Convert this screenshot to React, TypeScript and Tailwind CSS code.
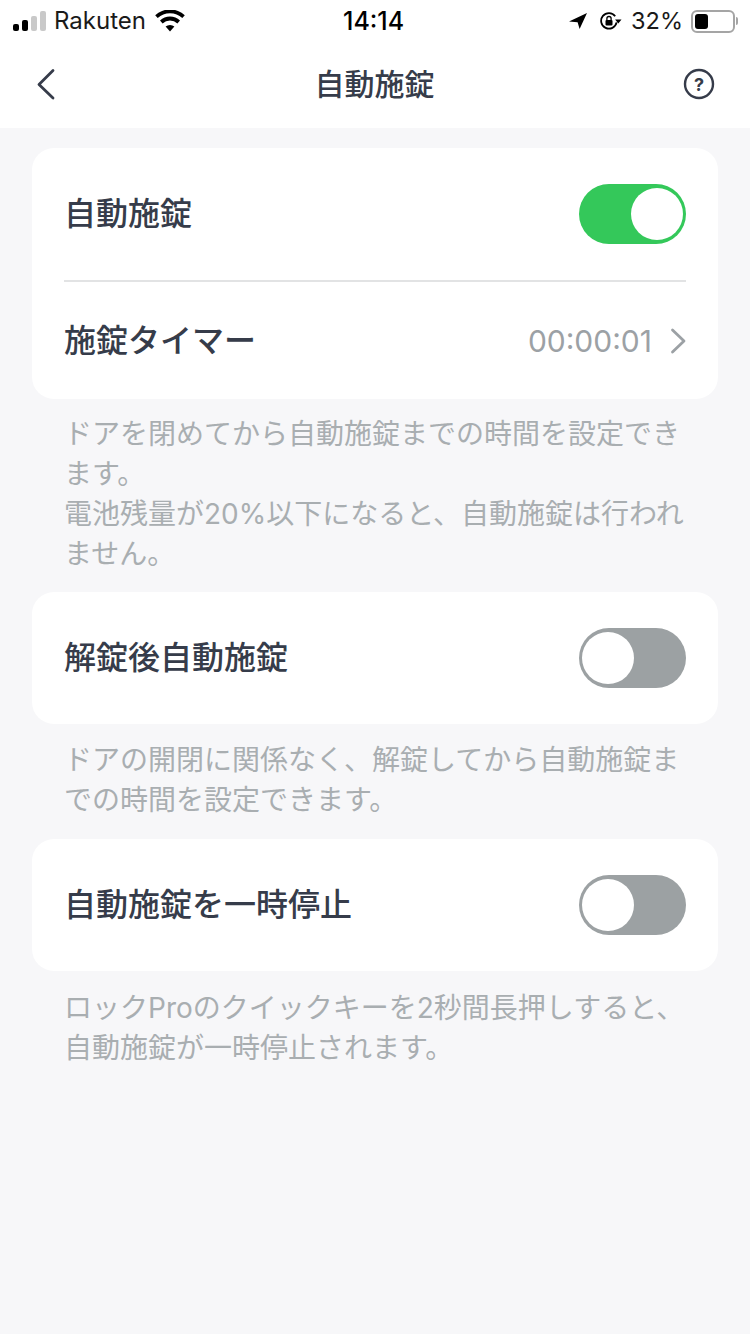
const FONT = "font-['Inter','Noto_Sans_CJK_JP',sans-serif]";

function Toggle({ on }: { on: boolean }) {
  return (
    <div
      className={`w-[107px] h-[60px] rounded-full py-[4px] flex ${on ? 'bg-[#34c85a] justify-end pr-[3px]' : 'bg-[#9ca1a3] justify-start pl-[3px]'}`}
    >
      <div className="w-[52px] h-[52px] rounded-full bg-white" />
    </div>
  );
}

function StatusBar() {
  return (
    <div className="h-[40px] relative flex items-center justify-between pl-[13px] pr-[12px] pt-[2px] text-[24px] text-[#1a1a1a]">
      <div className="flex items-center">
        <svg width="33" height="20" viewBox="0 0 33 20">
          <rect x="0" y="13" width="6" height="7" rx="2" fill="#000" />
          <rect x="9" y="9" width="6" height="11" rx="2" fill="#000" />
          <rect x="18" y="5" width="6" height="15" rx="2" fill="#c9c9c9" />
          <rect x="27" y="0" width="6" height="20" rx="2" fill="#c9c9c9" />
        </svg>
        <span className="ml-[8px] leading-none">Rakuten</span>
        <svg className="ml-[9px]" width="30" height="22" viewBox="0 0 30 22">
          <path d="M15 21.5 10.6 16.6a6.5 6.5 0 0 1 8.8 0Z" fill="#000" />
          <path d="M7.6 13.4 5 10.5a14.5 14.5 0 0 1 20 0l-2.6 2.9a10.7 10.7 0 0 0-14.8 0Z" fill="#000" />
          <path d="M2.7 8 .2 5.2a21.8 21.8 0 0 1 29.6 0L27.3 8a18 18 0 0 0-24.6 0Z" fill="#000" />
        </svg>
      </div>
      <span className="absolute left-[343px] top-[8px] text-[25px] leading-[26px] font-medium text-black">14:14</span>
      <div className="flex items-center">
        <svg width="18" height="16" viewBox="0 0 18 16">
          <path d="M18 0 10.6 16 8.6 9.2 0 8.6Z" fill="#000" />
        </svg>
        <svg className="ml-[13px]" width="22" height="18" viewBox="0 0 22 18">
          <path d="M16.6 10.4A7.8 7.8 0 1 1 15.2 4.2" fill="none" stroke="#000" strokeWidth="1.8" />
          <path d="M21.5 7.4h-6.4l3.2 4Z" fill="#000" />
          <rect x="5.5" y="8" width="7" height="5.4" rx="1" fill="#000" />
          <path d="M6.9 8V6.6a2.1 2.1 0 0 1 4.2 0V8" fill="none" stroke="#000" strokeWidth="1.3" />
        </svg>
        <span className="ml-[9px] text-[23.5px] leading-none">32%</span>
        <div className="ml-[8px] w-[44px] h-[23px] rounded-[6px] border-2 border-[#a5a5a5] p-[2px]">
          <div className="w-[13px] h-full rounded-[3px] bg-black" />
        </div>
        <div className="ml-[1px] w-[2px] h-[8px] rounded-r-sm bg-[#a5a5a5]" />
      </div>
    </div>
  );
}

function NavBar() {
  return (
    <div className="h-[88px] px-[33px] flex items-center justify-between">
      <svg width="26" height="34" viewBox="0 0 26 34">
        <path d="M20 3.5 6 17.5 20 31" fill="none" stroke="#363c4a" strokeWidth="2.8" strokeLinecap="round" strokeLinejoin="round" />
      </svg>
      <h1 className="ml-[7px] text-[30px] font-medium text-[#363c4a] leading-none">自動施錠</h1>
      <svg width="32" height="32" viewBox="0 0 32 32" className="mr-[2px]">
        <circle cx="16" cy="16" r="14" fill="none" stroke="#363c4a" strokeWidth="2.4" />
        <text x="16" y="22.5" textAnchor="middle" fontSize="18" fontWeight="700" fill="#363c4a" fontFamily="Inter, sans-serif">?</text>
      </svg>
    </div>
  );
}

function RowLabel({ children }: { children: string }) {
  return <span className="text-[32px] font-medium text-[#363c4a] leading-none">{children}</span>;
}

function Note({ children, className }: { children: React.ReactNode; className: string }) {
  return <p className={`pl-[32px] pr-[30px] text-[28px] leading-[40px] text-[#a9aeb1] ${className}`}>{children}</p>;
}

function ToggleCard({ label }: { label: string }) {
  return (
    <div className="bg-white rounded-[22px] h-[132px] pl-[32px] pr-[32px] flex items-center justify-between">
      <RowLabel>{label}</RowLabel>
      <Toggle on={false} />
    </div>
  );
}

export default function App() {
  return (
    <div className={`w-[750px] h-[1334px] overflow-hidden bg-[#f7f7f9] ${FONT}`}>
      <div className="bg-white">
        <StatusBar />
        <NavBar />
      </div>
      <div className="pt-[20px] pl-[32px] pr-[32px]">
        <div className="bg-white rounded-[22px] pl-[32px] pr-[32px]">
          <div className="h-[132px] flex items-center justify-between">
            <RowLabel>自動施錠</RowLabel>
            <Toggle on />
          </div>
          <div className="h-[2px] bg-[#e2e3e4]" />
          <div className="h-[117px] flex items-center justify-between">
            <RowLabel>施錠タイマー</RowLabel>
            <div className="flex items-center">
              <span className="text-[30px] leading-none text-[#9ca1a5]">00:00:01</span>
              <svg className="ml-[18px]" width="16" height="26" viewBox="0 0 16 26">
                <path d="M2.5 2 14 13 2.5 24" fill="none" stroke="#9ca1a5" strokeWidth="2.8" strokeLinecap="round" strokeLinejoin="round" />
              </svg>
            </div>
          </div>
        </div>
        <Note className="pt-[15px] pb-[18px]">
          ドアを閉めてから自動施錠までの時間を設定できます。
          <br />
          電池残量が20%以下になると、自動施錠は行われません。
        </Note>
        <ToggleCard label="解錠後自動施錠" />
        <Note className="pt-[16px] pb-[19px]">ドアの開閉に関係なく、解錠してから自動施錠までの時間を設定できます。</Note>
        <ToggleCard label="自動施錠を一時停止" />
        <Note className="pt-[17px]">ロックProのクイックキーを2秒間長押しすると、自動施錠が一時停止されます。</Note>
      </div>
    </div>
  );
}
